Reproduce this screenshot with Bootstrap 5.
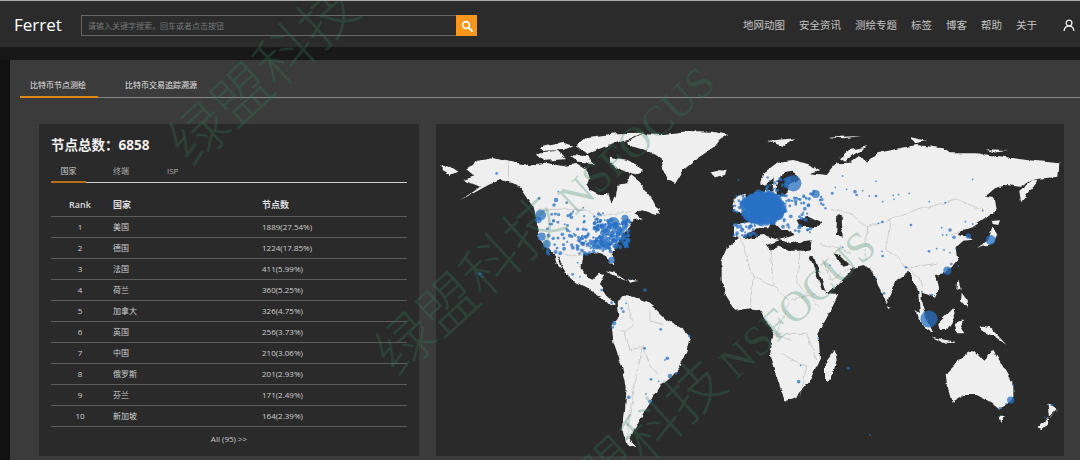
<!DOCTYPE html>
<html lang="zh-CN">
<head>
    <meta charset="UTF-8">
    <meta name="viewport" content="width=device-width, initial-scale=1.0">
    <link href="https://cdn.jsdelivr.net/npm/bootstrap@5.3.2/dist/css/bootstrap.min.css" rel="stylesheet">
    <title>Ferret</title>
    <style>
        html, body { height: 460px; overflow: hidden; }
        body { background: #111; color: #ddd; font-family: "Open Sans", "Noto Sans CJK SC", sans-serif; border-top: 1px solid #aaa; position: relative; }
        .top-bar { height: 46px; background: #2b2b2b; padding: 3px 5px 0 14px; }
        .logo { font-size: 17px; color: #fff; width: 67px; line-height: 1; padding: 0 0 2px; margin: 0; }
        .search-box { width: 396px; height: 21px; }
        .search-box .form-control { background: transparent; border: 1px solid #666; border-radius: 0; font-size: 8px; padding: 0 6px; color: #888; box-shadow: none; }
        .search-box .form-control::placeholder { color: #777; }
        .search-btn { width: 21px; padding: 0; background: #f7961e; border: 0; border-radius: 0 !important; display: flex; align-items: center; justify-content: center; }
        .top-links { gap: 14px; font-size: 10.5px; margin-right: 26px; }
        .top-links a { color: #c4c4c4; text-decoration: none; padding: 0; }
        .dark-strip { height: 13px; background: #181818; }
        .outer-panel { margin-left: 10px; height: 400px; background: #3b3b3b; padding-top: 17px; }
        .page-tabs { border-bottom: 1px solid #8a8a8a; height: 21px; margin-left: 10px; font-size: 8px; }
        .page-tabs a { color: #e4e4e4; text-decoration: none; display: block; height: 21px; padding: 2px 10px 0; }
        .page-tabs a.on { border-bottom: 2px solid #e08a1e; width: 78px; margin-right: 17px; }
        .panel-row { padding: 26px 16px 0 29px; gap: 17px; }
        .count-card { width: 380px; height: 332px; background: #2a2a2a; padding: 12px 12px 0; }
        .count-title { font-size: 13.500px; font-weight: 700; color: #f0f0f0; margin: 0 0 6px; line-height: 19px; }
        .sub-tabs { height: 22px; border-bottom: 1px solid #cfcfcf; font-size: 8px; }
        .sub-tabs a { color: #aaa; text-decoration: none; display: block; height: 22px; padding: 4px 0 0; }
        .sub-tabs a.on { width: 35px; border-bottom: 2px solid #b9701c; text-align: center; margin-right: 27px; color: #ccc; }
        .sub-tabs a.mid { margin-right: 38px; }
        .node-table { margin: 10px 0 0; font-size: 8px; --bs-table-bg: transparent; table-layout: fixed; }
        .node-table th, .node-table td { padding: 0 4px; border-bottom: 1px solid #5c5c5c; vertical-align: middle; height: 21px; background: transparent; color: #cfcfcf; }
        .node-table th { height: 23px; font-size: 9px; font-weight: 600; color: #ddd; }
        .node-table .rk { width: 58px; text-align: center; }
        .node-table .cn { width: 149px; }
        .all-link { font-size: 8px; text-align: center; color: #ccc; margin-top: 6px; }
        .map-card { width: 628px; height: 332px; background: #2a2a2a; }
        .map-card svg { display: block; filter: blur(.35px); }
        .land { fill: #efefef; }
        .sea { fill: #2a2a2a; }
        .border-line { fill: none; stroke: #a9a9a9; stroke-width: 1.500; }
        .node-dot { fill: #2a72c4; fill-opacity: .75; }
        .mark-layer { position: absolute; inset: 0; overflow: hidden; pointer-events: none; }
        .water-mark { position: absolute; white-space: nowrap; height: 58px; color: rgba(50, 130, 95, .28); font-family: "Noto Sans CJK SC", sans-serif; font-weight: 300; font-size: 58px; line-height: 58px; transform-origin: 0 50%; transform: rotate(-42.500deg); }
        .water-mark span { font-family: "Liberation Serif", serif; font-size: 43px; margin-left: 8px; }
        .mark-a { left: 175px; top: 120px; }
        .mark-b { left: 381px; top: 330px; }
        .mark-c { left: 542px; top: 494px; }
    </style>
</head>
<body>
    <nav class="navbar top-bar flex-nowrap">
        <a class="navbar-brand logo" href="#">Ferret</a>
        <div class="input-group flex-nowrap search-box me-auto">
            <input type="text" class="form-control" placeholder="请输入关键字搜索，回车或者点击按钮">
            <button class="btn search-btn" type="button" aria-label="搜索">
                <svg width="12" height="12" viewBox="0 0 12 12"><circle cx="5" cy="5" r="3.400" fill="none" stroke="#fff" stroke-width="1.600"/><path d="M7.600 7.600 11 11" stroke="#fff" stroke-width="1.800" stroke-linecap="round"/></svg>
            </button>
        </div>
        <div class="d-flex align-items-center top-links">
            <a href="#">地网动图</a>
            <a href="#">安全资讯</a>
            <a href="#">测绘专题</a>
            <a href="#">标签</a>
            <a href="#">博客</a>
            <a href="#">帮助</a>
            <a href="#">关于</a>
        </div>
        <svg width="12" height="13" viewBox="0 0 12 13"><circle cx="6" cy="4" r="2.900" fill="none" stroke="#eee" stroke-width="1.300"/><path d="M1 12c.4-3 2.400-4.800 5-4.800s4.600 1.800 5 4.800" fill="none" stroke="#eee" stroke-width="1.300"/></svg>
    </nav>
    <div class="dark-strip"></div>

    <div class="outer-panel">
        <div class="d-flex page-tabs">
            <a class="on" href="#">比特币节点测绘</a>
            <a href="#">比特币交易追踪溯源</a>
        </div>
        <div class="d-flex panel-row">
            <div class="count-card">
                <h5 class="count-title">节点总数：6858</h5>
                <div class="d-flex sub-tabs">
                    <a class="on" href="#">国家</a>
                    <a class="mid" href="#">终端</a>
                    <a href="#">ISP</a>
                </div>
                <table class="table node-table">
                    <thead>
                        <tr><th class="rk">Rank</th><th class="cn">国家</th><th>节点数</th></tr>
                    </thead>
                    <tbody id="nodeRows"></tbody>
                </table>
                <div class="all-link">All (95) &gt;&gt;</div>
            </div>
            <div class="map-card">
                <svg width="628" height="332" viewBox="436 124 628 332">
                    <defs>
                        <filter id="rough" x="-5%" y="-5%" width="110%" height="110%">
                            <feTurbulence type="fractalNoise" baseFrequency=".035" numOctaves="4" seed="3"/>
                            <feDisplacementMap in="SourceGraphic" scale="14" xChannelSelector="R" yChannelSelector="G"/>
                        </filter>
                    </defs>
                    <g transform="translate(430 120) scale(.33333)" filter="url(#rough)">
                        <!-- americas -->
                        <path class="land" d="M590 65 640 40 700 42 780 33 850 35 895 45 870 60 850 85 820 105 790 125 760 150 735 192 715 180 700 150 695 115 660 95 610 80Z"/>
                        <path class="land" d="M838 155 860 150 890 152 885 165 855 172 845 165Z"/>
                        <path class="land" d="M105 150 140 122 190 115 235 125 300 135 345 128 400 138 440 132 468 150 478 172 472 195 482 212 510 225 535 225 545 250 555 225 560 195 590 190 600 165 630 190 650 215 668 240 690 282 660 272 640 265 612 282 635 295 610 300 590 330 575 350 555 385 545 405 553 432 540 430 530 405 500 397 460 402 455 440 465 470 490 476 510 458 525 462 510 492 520 510 532 530 555 550 540 556 515 532 480 510 440 490 410 465 390 420 360 385 345 380 325 350 320 300 310 262 270 205 250 190 210 180 175 195 120 225 90 240 130 215 150 200 125 190 100 180 130 170Z"/>
                        <path class="land" d="M35 135 60 140 82 155 60 165 35 150Z"/>
                        <path class="land" d="M366 390 378 400 395 445 380 430Z"/>
                        <path class="land" d="M540 110 590 120 640 150 610 165 575 150 540 130Z"/>
                        <path class="land" d="M318 98 380 92 405 118 345 122Z"/>
                        <path class="land" d="M330 82 400 68 430 78 400 90 340 92Z"/>
                        <path class="land" d="M470 52 560 40 640 38 590 60 520 82 470 102 440 78Z"/>
                        <path class="land" d="M420 105 470 108 495 130 445 125Z"/>
                        <path class="land" d="M628 265 662 248 690 268 680 282 650 272Z"/>
                        <path class="land" d="M525 450 560 460 590 480 550 465Z"/>
                        <path class="land" d="M590 475 625 483 600 488Z"/>
                        <path class="land" d="M560 545 590 525 625 535 650 545 680 570 710 600 760 630 780 650 770 690 750 740 725 770 690 800 660 850 640 880 620 915 600 960 620 985 590 975 578 930 585 870 590 800 575 735 550 665 545 615 565 590Z"/>
                        <path class="border-line" d="M235 125 236 185M325 268 470 268 500 290 560 280 610 270M375 390 440 412 460 402M590 545 610 610 585 640 600 690 640 680 660 740 690 760M640 680 610 800 590 960M660 570 660 600 700 610M560 630 590 640"/>
                    </g>
                    <g transform="translate(750 120) scale(.33333)" filter="url(#rough)">
                        <!-- eurasia, africa -->
                        <path class="land" d="M-48 318 -45 312 10 305 -10 285 -50 268 0 260 30 225 50 210 70 210 75 175 45 197 30 190 40 160 85 125 130 120 180 135 210 150 180 160 230 165 260 130 300 128 330 105 350 130 370 110 380 100 450 85 500 75 580 85 600 100 680 100 760 110 830 120 928 130 925 170 880 175 845 180 810 200 770 195 735 205 705 230 735 235 740 270 700 300 670 320 640 330 620 345 655 350 668 360 640 362 620 380 625 420 605 445 580 460 555 465 565 510 555 530 530 520 515 515 515 550 535 610 548 640 510 590 505 515 490 480 475 455 440 480 410 550 385 500 375 465 345 435 305 445 300 460 255 505 225 522 265 525 240 575 205 640 210 715 180 780 140 830 105 845 90 800 60 710 70 640 30 570 0 565 -45 572 -75 525 -85 480 -85 420 -70 385 -30 355 -48 350Z"/>
                        <path class="land" d="M810 250 805 215 850 178 862 185 835 220Z"/>
                        <path class="land" d="M225 780 225 730 255 690 260 720 245 775Z"/>
                        <path class="land" d="M590 760 640 710 670 690 700 722 730 690 755 730 790 790 790 830 750 870 720 845 680 825 640 825 605 845 595 810Z"/>
                        <path class="land" d="M748 890 768 890 758 905Z"/>
                        <path class="land" d="M895 850 920 870 900 890Z"/>
                        <path class="land" d="M862 925 895 890 890 915 875 930Z"/>
                        <path class="land" d="M680 385 715 360 728 320 742 345 730 372 695 378Z"/>
                        <path class="land" d="M725 300 750 298 745 315 728 312Z"/>
                        <path class="land" d="M625 478 632 505 622 510ZM632 515 650 540 652 565 630 540Z"/>
                        <path class="land" d="M565 610 610 565 615 590 590 630 570 630Z"/>
                        <path class="land" d="M490 570 530 595 550 640 520 620Z"/>
                        <path class="land" d="M545 650 590 660 622 668 580 668Z"/>
                        <path class="land" d="M615 610 640 600 630 625 640 640 620 640Z"/>
                        <path class="land" d="M690 615 720 622 770 675 735 650 700 635Z"/>
                        <path class="land" d="M412 555 424 560 418 568Z"/>
                        <path class="land" d="M270 115 300 90 355 78 315 98 285 125Z"/>
                        <path class="land" d="M55 62 135 55 100 78 75 70Z"/>
                        <path class="land" d="M475 50 530 62 500 70Z"/>
                        <path class="land" d="M232 52 335 48 280 55Z"/>
                        <path class="land" d="M708 88 775 90 730 95Z"/>
                        <path class="land" d="M-45 235 -20 220 -8 250 -20 280 -52 268Z"/>
                        <path class="sea" d="M140 300 175 290 215 310 195 322 150 320Z"/>
                        <path class="sea" d="M262 285 275 290 278 350 258 345Z"/>
                        <path class="sea" d="M-20 358 40 345 90 360 130 345 120 330 95 330 65 300 55 325 20 325 -20 350ZM50 375 90 360 120 370 185 360 180 392 120 392 90 375 60 390Z"/>
                        <path class="sea" d="M178 410 192 412 228 515 215 505Z"/>
                        <path class="sea" d="M250 400 270 405 300 435 280 440Z"/>
                        <path class="sea" d="M80 200 95 160 125 155 150 175 118 195 105 225 80 225Z"/>
                        <path class="border-line" d="M245 265 300 280 350 320 420 300 500 270 620 240 700 270M350 320 345 420M420 300 410 385 470 445 510 470 520 510M470 445 560 430M600 350 640 330M-30 355 10 470 0 560M60 385 70 500 120 540 200 520M150 390 140 490 210 560M120 540 80 640 170 640 200 720M90 700 170 740 150 830M70 640 120 660M220 420 240 480 300 445M210 370 300 400M10 470 70 500"/>
                    </g>
                    <g id="dotsA" transform="translate(430 120) scale(.33333)"></g>
                    <g id="dotsB" transform="translate(750 120) scale(.33333)"></g>
                </svg>
            </div>
        </div>
    </div>

    <div class="mark-layer">
        <div class="water-mark mark-a">绿盟科技</div>
        <div class="water-mark mark-b">绿盟科技<span>NSFOCUS</span></div>
        <div class="water-mark mark-c">绿盟科技<span>NSFOCUS</span></div>
    </div>

    <script>
        const rows = [
            ['美国', '1889(27.54%)'], ['德国', '1224(17.85%)'], ['法国', '411(5.99%)'],
            ['荷兰', '360(5.25%)'], ['加拿大', '326(4.75%)'], ['英国', '256(3.73%)'],
            ['中国', '210(3.06%)'], ['俄罗斯', '201(2.93%)'], ['芬兰', '171(2.49%)'],
            ['新加坡', '164(2.39%)']
        ];
        document.getElementById('nodeRows').innerHTML = rows.map((r, i) =>
            `<tr><td class="rk">${i + 1}</td><td>${r[0]}</td><td>${r[1]}</td></tr>`).join('');

        // seeded so every render gives the same scatter
        let seed = 7;
        function rnd() { seed = (seed * 16807) % 2147483647; return seed / 2147483647; }

        function dot(g, x, y, r) {
            g.push(`<circle class="node-dot" cx="${x.toFixed(1)}" cy="${y.toFixed(1)}" r="${r.toFixed(1)}"/>`);
        }
        function cluster(g, x0, y0, w, h, n, r0, r1) {
            for (let i = 0; i < n; i++) dot(g, x0 + rnd() * w, y0 + rnd() * h, r0 + rnd() * (r1 - r0));
        }
        function blob(g, cx, cy, rx, ry, n, r0, r1) {
            for (let i = 0; i < n; i++) {
                const t = rnd() * Math.PI * 2, d = Math.sqrt(rnd());
                dot(g, cx + Math.cos(t) * d * rx, cy + Math.sin(t) * d * ry, r0 + rnd() * (r1 - r0));
            }
        }
        function points(g, list) { list.forEach(p => dot(g, p[0], p[1], p[2] * 1.35)); }

        const a = [];
        cluster(a, 490, 300, 110, 85, 170, 3, 7);
        cluster(a, 350, 275, 170, 130, 90, 3, 6);
        cluster(a, 445, 350, 100, 50, 40, 3, 6);
        points(a, [[332, 285, 12], [325, 300, 7], [335, 350, 9], [350, 372, 9], [545, 420, 7], [550, 310, 14], [585, 295, 8], [565, 330, 9], [520, 320, 7],
            [200, 160, 3], [378, 240, 5], [372, 255, 4], [327, 235, 3], [385, 215, 2], [410, 248, 3], [460, 263, 2], [150, 462, 4], [158, 470, 2],
            [428, 463, 3], [450, 470, 2], [443, 428, 2], [515, 510, 3], [545, 548, 3], [575, 565, 3], [588, 550, 2], [580, 575, 3], [552, 610, 5], [548, 622, 3],
            [692, 628, 3], [644, 685, 3], [712, 715, 4], [705, 720, 2], [720, 768, 5], [738, 760, 3], [663, 778, 3], [686, 784, 2], [596, 832, 4], [660, 845, 4], [648, 822, 2],
            [645, 510, 4], [600, 478, 2], [778, 648, 3], [925, 180, 2]]);
        document.getElementById('dotsA').innerHTML = a.join('');

        const b = [];
        blob(b, 38, 265, 62, 47, 300, 6, 11);
        cluster(b, -50, 225, 60, 55, 22, 3, 6);
        cluster(b, -50, 305, 70, 45, 30, 3, 6);
        cluster(b, 95, 225, 90, 115, 44, 3, 6);
        cluster(b, 40, 170, 70, 60, 22, 3, 6);
        cluster(b, 160, 210, 100, 70, 14, 3, 5);
        points(b, [[130, 190, 18], [115, 180, 7], [197, 222, 9], [537, 597, 19], [722, 360, 11], [592, 452, 9], [782, 840, 8], [655, 348, 6], [600, 330, 4],
            [278, 168, 2], [378, 184, 2], [668, 178, 2], [256, 202, 2], [290, 208, 2], [315, 215, 4], [320, 225, 3], [338, 212, 2], [358, 228, 2], [378, 228, 3], [430, 226, 2], [446, 224, 2], [432, 238, 2], [478, 220, 2],
            [398, 245, 2], [538, 245, 2], [586, 248, 2], [698, 272, 2], [385, 310, 2], [397, 306, 3], [483, 315, 3], [575, 323, 2], [578, 345, 2], [590, 345, 2], [612, 352, 4], [646, 305, 2], [668, 312, 2],
            [537, 394, 3], [560, 386, 2], [582, 390, 2], [600, 398, 2], [618, 385, 2], [398, 408, 3], [396, 394, 2], [604, 432, 3], [625, 438, 2], [240, 436, 2], [278, 382, 2], [468, 442, 3], [378, 475, 2], [402, 520, 3], [516, 515, 2], [545, 525, 3],
            [205, 655, 2], [152, 736, 2], [146, 785, 4], [295, 745, 3], [750, 865, 3], [768, 852, 2], [790, 795, 2], [905, 855, 3], [885, 892, 2], [360, 945, 2], [172, 330, 2]]);
        document.getElementById('dotsB').innerHTML = b.join('');
    </script>
    <script src="https://cdn.jsdelivr.net/npm/bootstrap@5.3.2/dist/js/bootstrap.bundle.min.js"></script>
</body>
</html>
